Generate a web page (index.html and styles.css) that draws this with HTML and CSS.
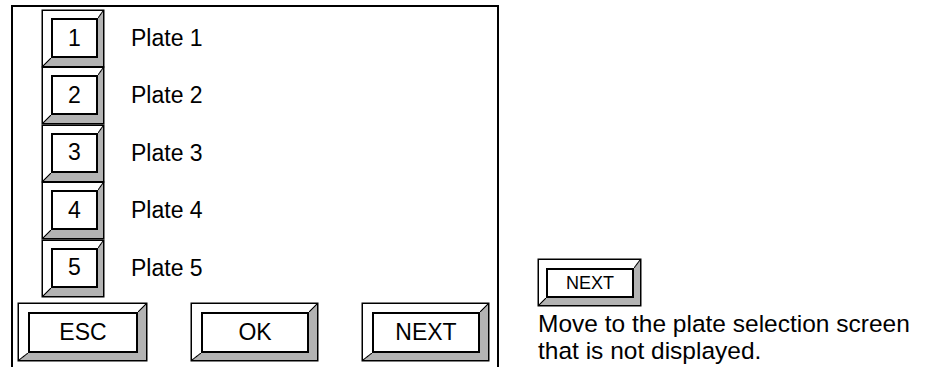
FILE: index.html
```html
<!DOCTYPE html>
<html lang="en">
<head>
    <meta charset="UTF-8">
    <meta name="viewport" content="width=device-width, initial-scale=1.0">
    <title>Plate selection</title>
    <link rel="stylesheet" href="styles.css">
</head>
<body>

<div class="page">
    <div class="screen">
        <ul class="plates">
            <li class="plate"><span class="key key-num"><span class="face">1</span></span><span class="plate-name">Plate 1</span></li>
            <li class="plate"><span class="key key-num"><span class="face">2</span></span><span class="plate-name">Plate 2</span></li>
            <li class="plate"><span class="key key-num"><span class="face">3</span></span><span class="plate-name">Plate 3</span></li>
            <li class="plate"><span class="key key-num"><span class="face">4</span></span><span class="plate-name">Plate 4</span></li>
            <li class="plate"><span class="key key-num"><span class="face">5</span></span><span class="plate-name">Plate 5</span></li>
        </ul>

        <div class="actions">
            <span class="key key-wide key-esc"><span class="face">ESC</span></span>
            <span class="key key-wide"><span class="face">OK</span></span>
            <span class="key key-wide"><span class="face">NEXT</span></span>
        </div>
    </div>

    <div class="note">
        <span class="key key-small"><span class="face">NEXT</span></span>
        <p class="note-text">Move to the plate selection screen<br>that is not displayed.</p>
    </div>
</div>

</body>
</html>
```

FILE: styles.css
```css
html, body {
    overflow: hidden;
}
body {
    margin: 0;
    font-family: "Liberation Sans", Arial, sans-serif;
    color: #000;
    background-color: #fff;
}
.page {
    display: flex;
    align-items: flex-start;
}

/* touch panel frame, bottom edge is cut off by the page */
.screen {
    box-sizing: border-box;
    width: 488px;
    height: 362px;
    margin: 5px 0 0 11px;
    border: 2px solid #000;
    border-bottom: none;
}
.plates {
    list-style: none;
    margin: 0;
    padding: 4px 0 0 30px;
    display: flex;
    flex-direction: column;
    gap: 2.4px;
}
.plate {
    display: flex;
    align-items: center;
}
.plate-name {
    margin-left: 28px;
    font-size: 23px;
}
.actions {
    display: flex;
    gap: 46px;
    margin-top: 8px;
    padding-left: 6px;
}

/* bevelled key: white top/left, grey bottom/right */
.key {
    box-sizing: border-box;
    position: relative;
    display: flex;
    border-style: solid;
    border-width: var(--bt) var(--br) var(--bb) var(--bl);
    border-color: #fff #b3b3b3 #b3b3b3 #fff;
    box-shadow: 0 0 0 1.5px #000;
}
.key::before,
.key::after {
    content: "";
    position: absolute;
    background: linear-gradient(to bottom right, transparent calc(50% - 1px), #000 50%, transparent calc(50% + 1px));
}
.key::before {
    top: calc(var(--bt) * -1);
    right: calc(var(--br) * -1);
    width: var(--br);
    height: var(--bt);
}
.key::after {
    bottom: calc(var(--bb) * -1);
    left: calc(var(--bl) * -1);
    width: var(--bl);
    height: var(--bb);
}
.face {
    flex: 1;
    display: flex;
    align-items: center;
    justify-content: center;
    border: 2px solid #000;
    background-color: #fff;
}
.key-num {
    --bt: 7px;
    --br: 5px;
    --bb: 8px;
    --bl: 8px;
    width: 60px;
    height: 55px;
    font-size: 23px;
}
.key-wide {
    --bt: 8px;
    --br: 8px;
    --bb: 7px;
    --bl: 9px;
    width: 125px;
    height: 56px;
    font-size: 23px;
}
.key-esc {
    width: 127px;
}
.key-small {
    --bt: 8px;
    --br: 6px;
    --bb: 7px;
    --bl: 7px;
    width: 101px;
    height: 45px;
    font-size: 18px;
}

.note {
    margin: 260px 0 0 40px;
}
.note-text {
    margin: 5px 0 0 -1px;
    font-size: 24.5px;
    line-height: 27px;
    white-space: nowrap;
}
```
